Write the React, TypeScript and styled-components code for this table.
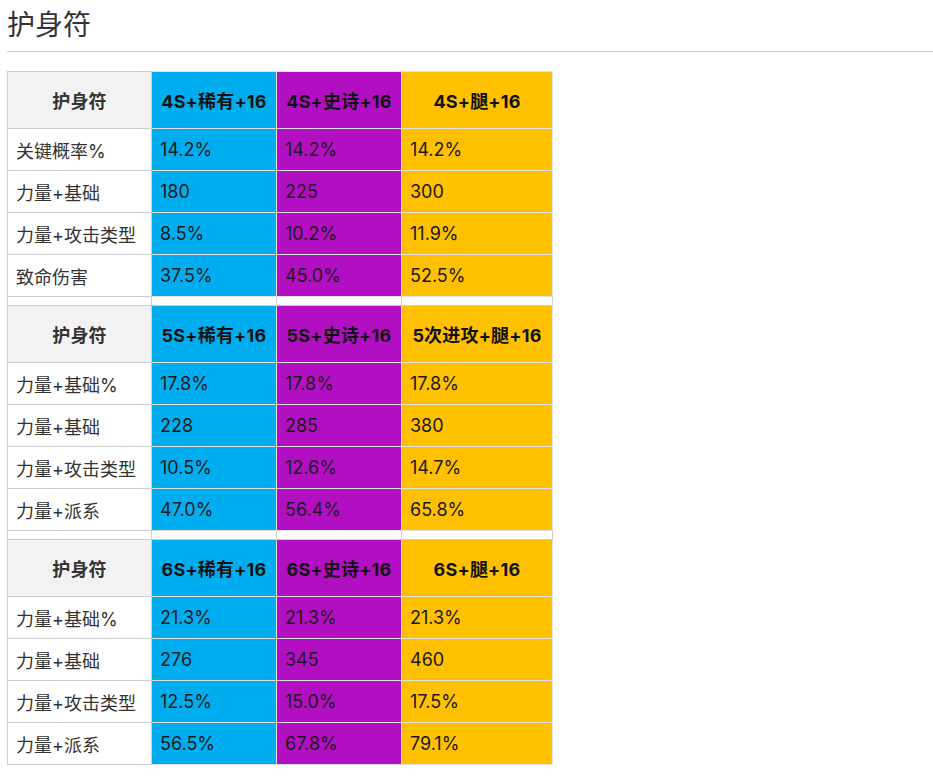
import React from "react";
import styled, { createGlobalStyle } from "styled-components";

const Global = createGlobalStyle`
  html, body { margin: 0; padding: 0; background: #fff; }
  body { font-family: Inter, "Noto Sans CJK SC", sans-serif; }
`;

const Page = styled.div`
  padding: 0 0 0 7px;
`;

const Title = styled.h2`
  margin: 0;
  padding: 5px 0 10px;
  font-family: "Noto Sans CJK SC", sans-serif;
  font-weight: 400;
  font-size: 28px;
  line-height: 36px;
  color: #333;
  border-bottom: 1px solid #cfcfcf;
`;

const Table = styled.table`
  margin-top: 19px;
  border-collapse: collapse;
  table-layout: fixed;
  width: 545px;
  font-family: Inter, "Noto Sans CJK SC", sans-serif;
`;

type Tone = "label" | "blue" | "purple" | "gold";

const bg: Record<Tone, string> = {
  label: "#ffffff",
  blue: "#00aeef",
  purple: "#b20fc2",
  gold: "#ffc000",
};

const HeadCell = styled.th<{ $tone: Tone }>`
  height: 56px;
  padding: 0 4px;
  border: 1px solid ${(p) => (p.$tone === "label" ? "#cfcfcf" : "#e2e2e2")};
  background: ${(p) => (p.$tone === "label" ? "#f2f2f2" : bg[p.$tone])};
  color: ${(p) => (p.$tone === "label" ? "#333" : "#111")};
  font-size: 18px;
  font-weight: 700;
  letter-spacing: 0.2px;
  text-align: center;
  vertical-align: middle;
  white-space: nowrap;
`;

const Cell = styled.td<{ $tone: Tone }>`
  height: 41px;
  padding: 0 8px;
  border: 1px solid ${(p) => (p.$tone === "label" ? "#cfcfcf" : "#e2e2e2")};
  background: ${(p) => bg[p.$tone]};
  color: ${(p) => (p.$tone === "label" ? "#333" : "#1a1a1a")};
  font-size: 18px;
  font-weight: 400;
  text-align: left;
  vertical-align: middle;
  white-space: nowrap;
`;

const Spacer = styled.td`
  height: 8px;
  padding: 0;
  border: 1px solid #cfcfcf;
  background: #fff;
`;

const tones: Tone[] = ["blue", "purple", "gold"];

type Block = { head: string[]; rows: string[][] };

const blocks: Block[] = [
  {
    head: ["4S+稀有+16", "4S+史诗+16", "4S+腿+16"],
    rows: [
      ["关键概率%", "14.2%", "14.2%", "14.2%"],
      ["力量+基础", "180", "225", "300"],
      ["力量+攻击类型", "8.5%", "10.2%", "11.9%"],
      ["致命伤害", "37.5%", "45.0%", "52.5%"],
    ],
  },
  {
    head: ["5S+稀有+16", "5S+史诗+16", "5次进攻+腿+16"],
    rows: [
      ["力量+基础%", "17.8%", "17.8%", "17.8%"],
      ["力量+基础", "228", "285", "380"],
      ["力量+攻击类型", "10.5%", "12.6%", "14.7%"],
      ["力量+派系", "47.0%", "56.4%", "65.8%"],
    ],
  },
  {
    head: ["6S+稀有+16", "6S+史诗+16", "6S+腿+16"],
    rows: [
      ["力量+基础%", "21.3%", "21.3%", "21.3%"],
      ["力量+基础", "276", "345", "460"],
      ["力量+攻击类型", "12.5%", "15.0%", "17.5%"],
      ["力量+派系", "56.5%", "67.8%", "79.1%"],
    ],
  },
];

export default function App() {
  return (
    <Page>
      <Global />
      <Title>护身符</Title>
      <Table>
        <colgroup>
          <col style={{ width: 144 }} />
          <col style={{ width: 125 }} />
          <col style={{ width: 125 }} />
          <col style={{ width: 151 }} />
        </colgroup>
        <tbody>
          {blocks.map((b, bi) => (
            <React.Fragment key={bi}>
              {bi > 0 && (
                <tr>
                  <Spacer />
                  <Spacer />
                  <Spacer />
                  <Spacer />
                </tr>
              )}
              <tr>
                <HeadCell $tone="label">护身符</HeadCell>
                {b.head.map((h, i) => (
                  <HeadCell key={i} $tone={tones[i]}>
                    {h}
                  </HeadCell>
                ))}
              </tr>
              {b.rows.map((r, ri) => (
                <tr key={ri}>
                  {r.map((c, ci) => (
                    <Cell key={ci} $tone={ci === 0 ? "label" : tones[ci - 1]}>
                      {c}
                    </Cell>
                  ))}
                </tr>
              ))}
            </React.Fragment>
          ))}
        </tbody>
      </Table>
    </Page>
  );
}
